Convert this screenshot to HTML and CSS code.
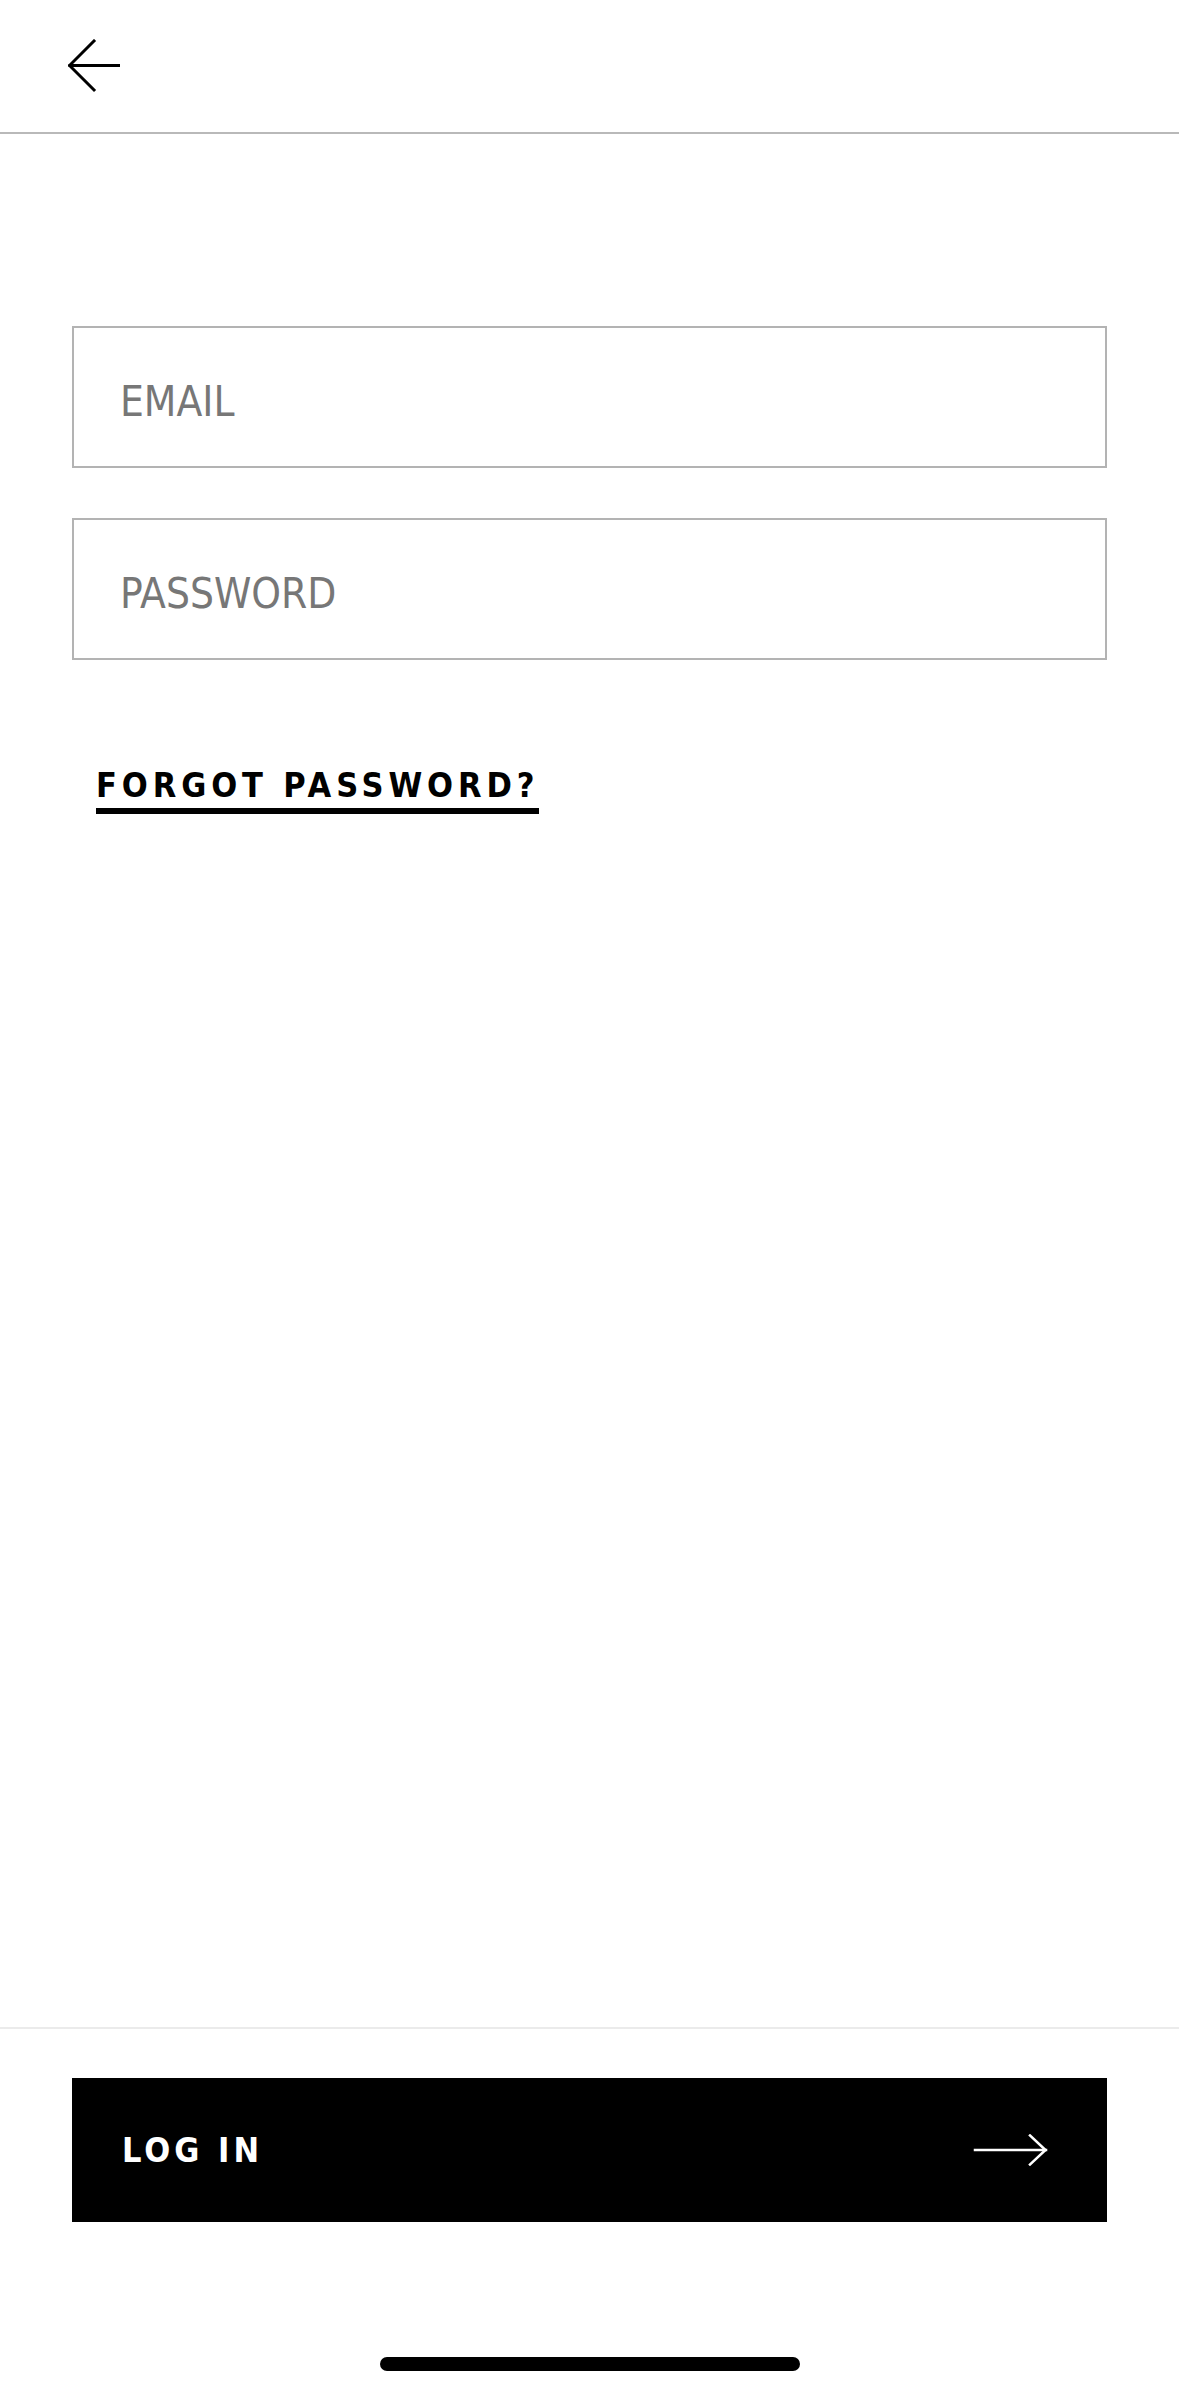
FILE: index.html
```html
<!DOCTYPE html>
<html lang="en">
<head>
<meta charset="utf-8">
<title>Log in</title>
<link rel="stylesheet" href="styles.css">
</head>
<body>
<div class="screen">
  <header class="topbar">
    <button class="back" aria-label="Back">
      <svg width="52" height="54" viewBox="0 0 52 54" fill="none" stroke="#000" stroke-width="3" stroke-linecap="square" stroke-linejoin="miter">
        <path d="M26 2 L1.5 26.5 L26 51"/>
        <path d="M2 26.5 H51"/>
      </svg>
    </button>
  </header>
  <main class="content">
    <div class="field"><span class="placeholder">EMAIL</span></div>
    <div class="field"><span class="placeholder">PASSWORD</span></div>
    <a class="forgot" href="#">FORGOT PASSWORD?</a>
  </main>
  <footer class="footer">
    <button class="login">
      <span class="login-label">LOG IN</span>
      <svg class="login-arrow" width="76" height="32" viewBox="0 0 76 32" fill="none" stroke="#fff" stroke-width="2.5" stroke-linecap="square">
        <path d="M2 16 H73"/>
        <path d="M57 1.5 L72.5 16 L57 30.5"/>
      </svg>
    </button>
    <div class="home-wrap"><div class="home-indicator"></div></div>
  </footer>
</div>
</body>
</html>
```

FILE: styles.css
```css
html, body {
  margin: 0;
  padding: 0;
  background: #ffffff;
}

body {
  font-family: "DejaVu Sans Condensed", "DejaVu Sans", sans-serif;
  color: #000;
}

.screen {
  width: 1179px;
  height: 2396px;
  display: flex;
  flex-direction: column;
}

.topbar {
  height: 132px;
  border-bottom: 2px solid #b9b9b9;
  display: flex;
  align-items: center;
  padding-left: 68px;
}

.back {
  background: none;
  border: 0;
  padding: 0;
  margin: 0;
  display: flex;
  cursor: pointer;
}

.content {
  flex: 1;
  padding: 192px 72px 0;
  display: flex;
  flex-direction: column;
  gap: 50px;
}

.field {
  height: 142px;
  box-sizing: border-box;
  border: 2px solid #b3b3b3;
  display: flex;
  align-items: center;
  padding-left: 46px;
}

.placeholder {
  font-size: 42px;
  color: #777777;
  letter-spacing: 0;
  line-height: 1;
  padding-top: 9px;
}

.forgot {
  align-self: flex-start;
  margin-left: 24px;
  margin-top: 58px;
  font-weight: bold;
  font-size: 34px;
  letter-spacing: 4.9px;
  line-height: 1;
  color: #000;
  text-decoration: none;
  padding-bottom: 6px;
  border-bottom: 6px solid #000;
}

.footer {
  border-top: 2px solid #ebebeb;
  padding: 49px 72px 0;
  display: flex;
  flex-direction: column;
}

.login {
  height: 144px;
  background: #000;
  border: 0;
  margin: 0;
  display: flex;
  align-items: center;
  justify-content: space-between;
  padding: 0 58px 0 50px;
  cursor: pointer;
}

.login-label {
  font-family: "DejaVu Sans Condensed", "DejaVu Sans", sans-serif;
  font-weight: bold;
  font-size: 34px;
  letter-spacing: 4px;
  color: #fff;
  line-height: 1;
}

.home-wrap {
  margin-top: 135px;
  margin-bottom: 25px;
  display: flex;
  justify-content: center;
}

.home-indicator {
  width: 420px;
  height: 14px;
  border-radius: 7px;
  background: #000;
}
```
